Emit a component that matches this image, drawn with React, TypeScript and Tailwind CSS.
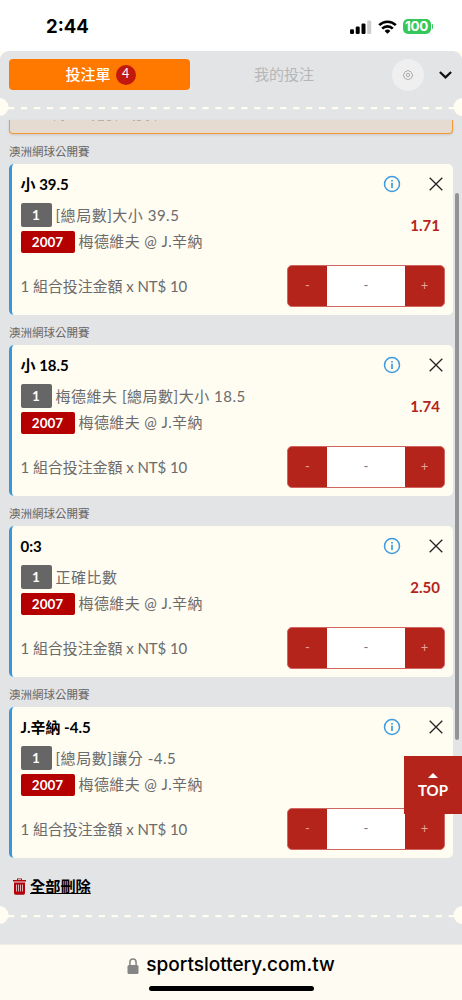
import React from 'react';

interface Bet {
  title: string;
  market: string;
  odds: string;
}

const bets: Bet[] = [
  { title: '小 39.5', market: '[總局數]大小 39.5', odds: '1.71' },
  { title: '小 18.5', market: '梅德維夫 [總局數]大小 18.5', odds: '1.74' },
  { title: '0:3', market: '正確比數', odds: '2.50' },
  { title: 'J.辛納 -4.5', market: '[總局數]讓分 -4.5', odds: '' },
];

function StatusBar() {
  return (
    <div className="flex h-[51px] shrink-0 items-center bg-white pt-[2px] pl-[46px] pr-[29px] font-['Inter','Liberation_Sans',sans-serif]">
      <span className="text-[18.5px] font-bold">2:44</span>
      <div className="ml-auto flex items-center">
        <svg width="22" height="14" viewBox="0 0 22 14">
          <rect x="0" y="9.2" width="4" height="4.8" rx="1.2" />
          <rect x="5.7" y="6.6" width="4" height="7.4" rx="1.2" />
          <rect x="11.5" y="3.6" width="4" height="10.4" rx="1.2" />
          <rect x="17.2" y="0.6" width="4" height="13.4" rx="1.2" fill="#ccc" />
        </svg>
        <svg className="ml-[6px]" width="19" height="14" viewBox="0 0 19 14" fill="none" stroke="#000" strokeWidth="2.6">
          <path d="M1.2 5.2a11.8 11.8 0 0 1 16.6 0" />
          <path d="M4.2 8.6a7.5 7.5 0 0 1 10.6 0" />
          <path d="M9.5 13.7 6.6 10.9a4.2 4.2 0 0 1 5.8 0z" fill="#000" stroke="none" />
        </svg>
        <span className="ml-[6px] flex h-[15px] w-[28px] items-center justify-center rounded-[5px] bg-[#34c759] text-[13.5px] font-bold tracking-[-0.3px] text-white">
          100
        </span>
        <span className="ml-px h-[5px] w-[1.5px] rounded-r-full bg-[#34c759]" />
      </div>
    </div>
  );
}

function Perforation() {
  return (
    <svg className="block shrink-0" width="462" height="18" viewBox="0 0 462 18">
      <path d="M8 10.1H455" stroke="#fffcf2" strokeWidth="2.4" strokeDasharray="6.2 6.76" />
      <circle cx="-0.5" cy="9" r="9" fill="#fffcf2" />
      <circle cx="462.5" cy="9" r="9" fill="#fffcf2" />
    </svg>
  );
}

function InfoIcon() {
  return (
    <svg width="18" height="18" viewBox="0 0 18 18" fill="none" stroke="#3d9be0" strokeWidth="1.5">
      <circle cx="9" cy="9" r="7.5" />
      <path d="M9 7.7v5.2" strokeWidth="1.7" />
      <path d="M9 5v1.5" strokeWidth="1.7" />
    </svg>
  );
}

function Stepper() {
  return (
    <div className="flex h-[42px] w-[158px] overflow-hidden rounded-[5px] border border-[#d0665f] bg-[#b5241b] text-[13px]">
      <button className="w-[39px] text-[#e3a29d]">-</button>
      <div className="flex flex-1 items-center justify-center bg-white text-[#777]">-</div>
      <button className="w-[39px] text-[#e3a29d]">+</button>
    </div>
  );
}

function BetCard({ bet }: { bet: Bet }) {
  return (
    <section className="h-[181px] pl-[9px] pr-[9px]">
      <h3 className="flex h-[30px] items-center pt-[6px] text-[11.5px] text-[#666]">澳洲網球公開賽</h3>
      <div className="h-[151px] rounded-[5px] border-l-[3px] border-[#3498db] bg-[#fffcf2] pl-[8.5px] pr-[8px]">
        <div className="flex h-[39px] items-center">
          <span className="pt-px text-[15px] font-bold text-black">{bet.title}</span>
          <div className="ml-auto flex items-center gap-[28px] pr-[2.5px]">
            <InfoIcon />
            <svg width="14" height="14" viewBox="0 0 14 14" stroke="#222" strokeWidth="1.3">
              <path d="M.7.7l12.6 12.6M13.3.7.7 13.3" />
            </svg>
          </div>
        </div>
        <div className="flex h-[62px] items-start text-[15px] text-[#6b6b6b]">
          <div className="flex flex-col gap-[4px]">
            <div className="flex h-[24px] items-center gap-1">
              <span className="flex h-[24px] w-[31px] items-center justify-center rounded-[2px] bg-[#666] pt-px text-[13.5px] font-bold text-white">1</span>
              <span className="tracking-[0.52px]">{bet.market}</span>
            </div>
            <div className="flex h-[22px] items-center gap-1">
              <span className="flex h-[22px] w-[54px] items-center justify-center rounded-[2px] bg-[#b50000] pt-px text-[13.5px] font-bold text-white">2007</span>
              <span className="pb-px tracking-[0.4px]">梅德維夫 @ J.辛納</span>
            </div>
          </div>
          <span className="ml-auto pt-[11px] pr-[5px] text-[15px] font-bold text-[#b5241b]">{bet.odds}</span>
        </div>
        <div className="flex items-center justify-between">
          <span className="text-[15px] tracking-[-0.07px] text-[#6b6b6b]">1 組合投注金額 x NT$ 10</span>
          <Stepper />
        </div>
      </div>
    </section>
  );
}

export default function App() {
  return (
    <div className="relative flex h-[1000px] w-[462px] flex-col overflow-hidden bg-[#fffcf2] font-['Lato','Noto_Sans_CJK_TC',sans-serif]">
      <StatusBar />
      <div className="flex h-[893px] shrink-0 flex-col rounded-t-[9px] bg-[#e3e4e6]">
        <div className="flex h-[47px] shrink-0 items-center pl-[9px] pr-[10px]">
          <button className="flex h-[31px] w-[181px] items-center justify-center gap-[5px] rounded-[4px] bg-[#ff7900] pl-[2px] text-[15px] text-white">
            <span className="font-medium">投注單</span>
            <span className="flex h-[20px] w-[20px] items-center justify-center rounded-full bg-[#c1190f] text-[12.5px]">4</span>
          </button>
          <span className="ml-[64px] text-[15px] text-[#b5b6b8]">我的投注</span>
          <span className="ml-auto flex h-[32px] w-[32px] items-center justify-center rounded-full bg-[#efefef]">
            <svg width="10" height="10" viewBox="0 0 10 10" fill="none" stroke="#9c9c9c" strokeWidth="0.8">
              <path d="M4 .6h2l.5 1.1 1.2-.2 1 1-.2 1.2 1 .5v2l-1 .4.2 1.2-1 1-1.200-.2L6 9.600H4l-.5-1-1.200.2-1-1 .2-1.200-1-.4v-2l1-.5-.2-1.200 1-1 1.200.2z" />
              <circle cx="5" cy="5" r="1.7" />
            </svg>
          </span>
          <svg className="mr-[0.5px] ml-[15px]" width="13" height="9" viewBox="0 0 13 9" fill="none" stroke="#111" strokeWidth="2.2">
            <path d="M.9 2 6.5 7.400l5.600-5.400" />
          </svg>
        </div>
        <Perforation />
        <div className="h-[18px] shrink-0 px-[9px] pt-[4px]">
          <div className="h-[14px] rounded-b-[4px] border border-t-0 border-[#f39a36] bg-[#e6dbd0] shadow-sm">
            {/* bottom edge of the notice text scrolled under the header */}
            <svg className="block" width="160" height="1" viewBox="0 0 160 1" stroke="#b9b2aa" strokeWidth="1">
              <path d="M44 .5h1M51 .5h3M82 .5h2M88 .5h6M97 .5h4M106 .5h1M123 .5h2M127 .5h4M136 .5h3M145 .5h1" />
            </svg>
          </div>
        </div>
        <main className="h-[724px] shrink-0">
          {bets.map((bet) => (
            <BetCard key={bet.title} bet={bet} />
          ))}
        </main>
        <div className="flex h-[48px] shrink-0 items-center gap-[4px] pl-[13px] pt-[8px]">
          <svg width="13" height="17" viewBox="0 0 13 17" fill="#b5000b">
            <path d="M4 2V.5h5V2h4v1.6H0V2zM5 1.3V2h3v-.7z" fillRule="evenodd" />
            <path d="M1 4.5h11V15q0 1.7-1.5 1.7h-8Q1 16.7 1 15z" />
            <path d="M3.5 6.500v7M5.500 6.500v7M7.500 6.500v7M9.500 6.500v7" stroke="#ecdadc" strokeWidth="0.8" />
          </svg>
          <a className="text-[15.2px] font-bold text-black underline">全部刪除</a>
        </div>
        <Perforation />
      </div>
      <footer className="flex flex-1 flex-col items-center border-t border-[#eeece5] bg-[#fefbf2] font-['Inter','Liberation_Sans',sans-serif]">
        <div className="flex h-[41px] items-center gap-[7px]">
          <svg width="12" height="16" viewBox="0 0 11 16">
            <rect y="7" width="11" height="9" rx="1.5" fill="#858585" />
            <path d="M2.400 8V4.200a3.100 3.100 0 0 1 6.200 0V8" fill="none" stroke="#858585" strokeWidth="1.5" />
          </svg>
          <span className="text-[19px] font-medium text-black">sportslottery.com.tw</span>
        </div>
        <div className="h-[5px] w-[165px] rounded-full bg-black" />
      </footer>
      <div className="absolute left-[455px] top-[193px] h-[547px] w-[4px] rounded-full bg-[#929395]" />
      <button className="absolute right-0 top-[756px] flex h-[58px] w-[58px] flex-col items-center bg-[#b5241b] pt-[17px] text-white">
        <svg width="10" height="5" viewBox="0 0 10 5" fill="#fff">
          <path d="M5 0 10 5H0z" />
        </svg>
        <span className="mt-[2px] text-[15px] font-bold leading-[20px]">TOP</span>
      </button>
    </div>
  );
}
